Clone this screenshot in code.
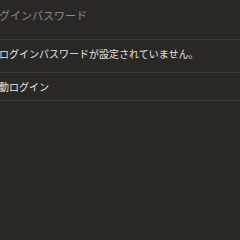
export default function App() {
  return (
    <div className="w-[240px] h-[240px] overflow-hidden bg-[#292825] font-['Noto_Sans_CJK_JP','Noto_Sans',sans-serif]">
      <div className="-ml-[12px] w-[252px]">
        <div className="h-[39px] pt-[8px] text-[11px] leading-[14px] text-[#8a8984] whitespace-nowrap">
          ログインパスワード
        </div>
        <div className="h-px bg-[#3b3a35]" />
        <div className="h-[32px] pt-[8px] pl-[11px] text-[10px] leading-[12px] text-[#e4e4e2] whitespace-nowrap">
          ログインパスワードが設定されていません。
        </div>
        <div className="h-px bg-[#3b3a35]" />
        <div className="h-[27px] pt-[8px] pl-[1px] text-[10px] leading-[12px] text-[#e4e4e2] whitespace-nowrap">
          自動ログイン
        </div>
        <div className="h-px bg-[#3b3a35]" />
      </div>
    </div>
  );
}
